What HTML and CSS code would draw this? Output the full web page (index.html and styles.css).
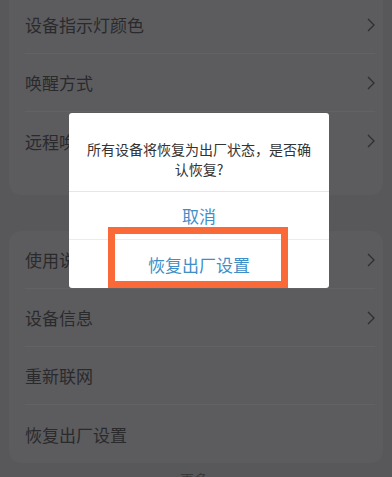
FILE: index.html
```html
<!DOCTYPE html>
<html lang="zh">
<head>
<meta charset="utf-8">
<link rel="stylesheet" href="styles.css">
</head>
<body>
<div class="page">
  <div class="card card-top">
    <div class="row"><span>设备指示灯颜色</span><svg class="chev" viewBox="0 0 8 14"><path d="M1 1l6 6-6 6"/></svg></div>
    <div class="row"><span>唤醒方式</span><svg class="chev" viewBox="0 0 8 14"><path d="M1 1l6 6-6 6"/></svg></div>
    <div class="row last"><span>远程唤醒</span><svg class="chev" viewBox="0 0 8 14"><path d="M1 1l6 6-6 6"/></svg></div>
  </div>
  <div class="card card-bottom">
    <div class="row"><span>使用说明</span><svg class="chev" viewBox="0 0 8 14"><path d="M1 1l6 6-6 6"/></svg></div>
    <div class="row"><span>设备信息</span><svg class="chev" viewBox="0 0 8 14"><path d="M1 1l6 6-6 6"/></svg></div>
    <div class="row"><span>重新联网</span></div>
    <div class="row last"><span>恢复出厂设置</span></div>
  </div>
  <div class="more">更多</div>
</div>

<div class="dialog">
  <div class="msg">所有设备将恢复为出厂状态，是否确认恢复?</div>
  <div class="btn">取消</div>
  <div class="btn">恢复出厂设置</div>
</div>
<div class="highlight"></div>
</body>
</html>
```

FILE: styles.css
```css
html, body {
  margin: 0;
  padding: 0;
  width: 392px;
  height: 477px;
  overflow: hidden;
  background: #58585a;
  font-family: "Noto Sans CJK SC", "Noto Sans", sans-serif;
}
.page {
  display: flex;
  flex-direction: column;
  gap: 36px;
  margin-top: -4px;
}
.card {
  margin: 0 9px;
  background: #5c5c5e;
  border-radius: 12px;
  padding: 0 8px 0 16px;
}
.card-top {
  border-top-left-radius: 0;
  border-top-right-radius: 0;
  padding-bottom: 25px;
}
.row {
  height: 58px;
  display: flex;
  align-items: center;
  justify-content: space-between;
  border-bottom: 1px solid #626264;
  box-sizing: border-box;
  font-size: 17px;
  color: #2a2a2d;
}
.row.last {
  border-bottom: none;
}
.chev {
  width: 8px;
  height: 14px;
  fill: none;
  stroke: #2e2e31;
  stroke-width: 1.3;
  margin-right: 0;
}
.more {
  margin-top: -30px;
  padding-left: 180px;
  font-size: 14px;
  color: #3a3a3c;
}
.dialog {
  position: absolute;
  left: 69px;
  top: 113px;
  width: 260px;
  background: #ffffff;
  border-radius: 3px;
  display: flex;
  flex-direction: column;
}
.msg {
  padding: 26px 16px 12px;
  font-size: 14px;
  line-height: 20px;
  color: #333333;
  text-align: center;
  border-bottom: 1px solid #e6e6e6;
}
.btn {
  height: 47px;
  display: flex;
  align-items: center;
  justify-content: center;
  font-size: 17px;
  color: #3f8fc7;
}
.btn + .btn {
  border-top: 1px solid #ececec;
  height: 48px;
}
.highlight {
  position: absolute;
  left: 108px;
  top: 227px;
  width: 180px;
  height: 61px;
  box-sizing: border-box;
  border: 7px solid #fa6a38;
}
```
